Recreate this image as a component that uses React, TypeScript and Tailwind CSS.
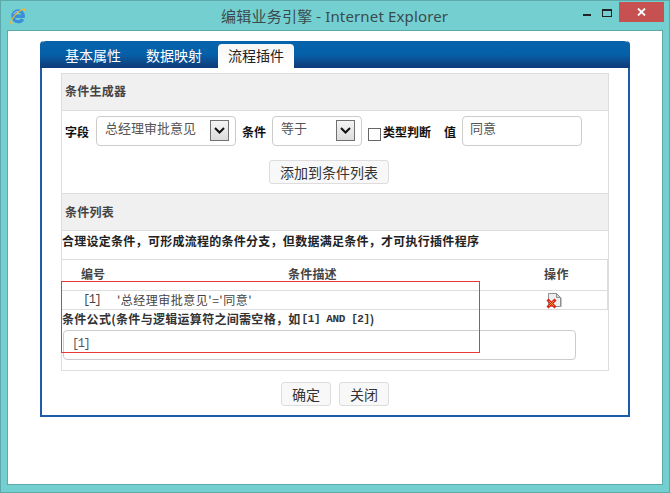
const cjk = "font-['Noto_Sans_CJK_SC','Liberation_Sans',sans-serif]";

function IeLogo() {
  return (
    <svg width="18" height="18" viewBox="0 0 18 18" fill="none">
      <path d="M4.400 9.300h9.800c0-3.200-2.200-5.400-5-5.400-3 0-5.200 2.400-5.200 5.400 0 3.100 2.200 5.300 5.200 5.300 2 0 3.600-.9 4.500-2.500" stroke="#3a8fd8" strokeWidth="3.400" />
      <path d="M4.600 7.300c.6-1.700 2.400-2.800 4.400-2.800" stroke="#a9d5f3" strokeWidth="1" />
      <path d="M1.600 16.800c-1.500-1.300 1-6.300 5.600-10.600C10.700 3 14.800.6 16 1.800c.6.600-.2 2-1.100 3 .2-.9.300-1.500 0-1.800-.8-.7-4 1.200-6.800 3.900C4.300 10.400 2 14.400 2.900 15.500c.4.400 1.200.3 2.200-.1-1.300.9-2.800 1.800-3.500 1.400z" fill="#f2b92b" />
    </svg>
  );
}

function DeleteIcon() {
  return (
    <svg width="16" height="18" viewBox="0 0 16 18" fill="none">
      <path d="M2.500 2.500h8l4 4v9h-12z" fill="#eeeeee" stroke="#8f8f8f" />
      <path d="M10.500 2.500v4h4z" fill="#d4d4d4" stroke="#8f8f8f" />
      <path d="M15.500 7v9" stroke="#c4c4c4" />
      <path d="M1.500 8.500l8 8M9.500 8.500l-8 8" stroke="#d8261c" strokeWidth="3" />
      <path d="M3 10l5 5M8 10l-5 5" stroke="#f0a020" strokeWidth=".9" />
    </svg>
  );
}

function Arrow() {
  return (
    <div className="flex h-[21px] w-[19px] items-center justify-center border border-[#707070] bg-gradient-to-b from-[#f4f4f4] to-[#dcdcdc]">
      <svg width="11" height="7" viewBox="0 0 11 7" fill="none">
        <path d="M1 1l4.500 4.500L10 1" stroke="#111" strokeWidth="2" />
      </svg>
    </div>
  );
}

function Select({ text, width }: { text: string; width: string }) {
  return (
    <div className={`flex h-[30px] ${width} items-center justify-between rounded-[4px] border border-[#cccccc] pl-[8px] pr-[6px] text-[13px] font-normal text-[#555]`}>
      <span className="-mt-[5px]">{text}</span>
      <Arrow />
    </div>
  );
}

function Btn({ text, width }: { text: string; width: string }) {
  return (
    <div className={`flex ${width} items-center justify-center rounded-[3px] border border-[#dddddd] bg-[#f8f8f8] text-[#333]`}>
      {text}
    </div>
  );
}

function SectionHead({ text, pad }: { text: string; pad: string }) {
  return (
    <div className={`flex h-[36px] items-center bg-[#f0f0f0] pl-[3px] ${pad} text-[12px] font-bold tracking-[0.25px] text-[#444]`}>
      {text}
    </div>
  );
}

export default function App() {
  return (
    <div className={`flex h-[493px] w-[670px] flex-col border border-[#5da9a9] bg-[#74d0d0] ${cjk}`}>
      <div className="relative flex h-[29px] shrink-0 items-center">
        <div className="ml-[8px] mt-[1px]"><IeLogo /></div>
        <div className="ml-[194px] mt-[1px] text-[15px] tracking-[0.25px] text-[#3a4a4e]">
          编辑业务引擎 - <span className="font-['Noto_Sans'] tracking-[0.15px]">Internet Explorer</span>
        </div>
        <div className="ml-auto mb-[8px] mr-[5px] flex items-start">
          <div className="mr-[11px] mt-[12px] h-[2px] w-[8px] bg-[#222]" />
          <div className="mr-[7px] mt-[7px] h-[8px] w-[10px] border border-t-2 border-[#222]" />
          <div className="flex h-[20px] w-[45px] items-center justify-center bg-[#c75050]">
            <svg width="9" height="8" viewBox="0 0 9 8"><path d="M1 .5l7 7M8 .5l-7 7" stroke="#fff" strokeWidth="1.800" /></svg>
          </div>
        </div>
      </div>

      <div className="mx-[6px] mb-[7px] flex-1 border border-[#5da9a9] bg-white pl-[32px] pt-[10px]">
        <div className="w-[590px] rounded-t-[4px] border-x-2 border-b-2 border-[#1c5ca8]">
          <div className="-mx-[2px] flex h-[27px] items-end rounded-t-[6px] bg-gradient-to-b from-[#0563ac] via-[#0560a8] to-[#0e3a78] pl-[25px] text-[14px] text-white">
            <div className="h-[24px] w-[81px] leading-[22px]">基本属性</div>
            <div className="h-[24px] w-[72px] leading-[22px]">数据映射</div>
            <div className="h-[24px] w-[76px] rounded-t-[4px] bg-gradient-to-b from-[#f6f6f6] to-[#ffffff] text-center leading-[22px] text-[#222]">流程插件</div>
          </div>

          <div className="pb-[9px] pl-[19px] pt-[5px]">
            <div className="relative h-[298px] w-[548px] border border-[#dddddd]">
              <SectionHead text="条件生成器" pad="pb-[2px]" />
              <div className="border-y border-[#dddddd]">
                <div className="flex h-[36px] items-center pl-[3px] pt-[3px] text-[12px] font-bold text-[#111]">
                  <span className="mt-[3px] w-[31px]">字段</span>
                  <Select text="总经理审批意见" width="w-[140px]" />
                  <span className="ml-[6px] mt-[3px] w-[30px]">条件</span>
                  <Select text="等于" width="w-[90px]" />
                  <div className="ml-[6px] mt-[7px] h-[13px] w-[13px] border border-[#666]" />
                  <span className="ml-[2px] mt-[3px] w-[61px]">类型判断</span>
                  <span className="mt-[3px] w-[18px]">值</span>
                  <div className="flex h-[30px] w-[120px] items-center rounded-[4px] border border-[#cccccc] pl-[7px] text-[13px] font-normal text-[#555]">
                    <span className="-mt-[5px]">同意</span>
                  </div>
                </div>
                <div className="flex h-[46px] justify-center pr-[12px] pt-[13px] text-[14px]">
                  <Btn text="添加到条件列表" width="h-[24px] w-[120px]" />
                </div>
              </div>
              <SectionHead text="条件列表" pad="pb-0" />
              <div className="h-[29px] border-t border-[#dddddd] text-[12px] font-bold leading-[19px] tracking-[0.27px] text-[#222]">
                合理设定条件，可形成流程的条件分支，但数据满足条件，才可执行插件程序
              </div>

              <div className="w-[547px] border-y border-r-2 border-[#dddddd] text-[12px] text-[#444]">
                <div className="flex h-[31px] items-center border-b border-[#dddddd] pb-[2px] font-bold">
                  <span className="ml-[19px] w-[207px]">编号</span>
                  <span className="w-[256px] tracking-[0.2px]">条件描述</span>
                  <span className="tracking-[0.4px]">操作</span>
                </div>
                <div className="flex h-[18px] items-center">
                  <span className="ml-[21px] w-[34px] font-['Liberation_Mono'] tracking-[-1.400px]">[1]</span>
                  <span className="w-[429px] tracking-[0.5px]">'总经理审批意见'='同意'</span>
                  <DeleteIcon />
                </div>
              </div>

              <div className="flex h-[20px] items-center whitespace-nowrap pb-[2px] text-[12px] font-bold tracking-[0.3px] text-[#333]">
                条件公式(条件与逻辑运算符之间需空格，如<span className="ml-[1px] font-['Liberation_Mono'] text-[11px] tracking-[-0.4px]">[1] AND [2]</span>)
              </div>
              <div className="ml-[1px] h-[30px] w-[513px] rounded-[4px] border border-[#cccccc] pl-[8px] pt-[4px] font-['Liberation_Mono'] text-[12px] leading-[18px] tracking-[-1.400px] text-[#555]">
                [1]
              </div>

              <div className="pointer-events-none absolute -left-px top-[207px] h-[72px] w-[419px] border border-[#e8383c]" />
            </div>

            <div className="mt-[11px] flex h-[24px] justify-center gap-[8px] pr-[19px] text-[14px]">
              <Btn text="确定" width="h-[24px] w-[50px]" />
              <Btn text="关闭" width="h-[24px] w-[50px]" />
            </div>
          </div>
        </div>
      </div>
    </div>
  );
}
